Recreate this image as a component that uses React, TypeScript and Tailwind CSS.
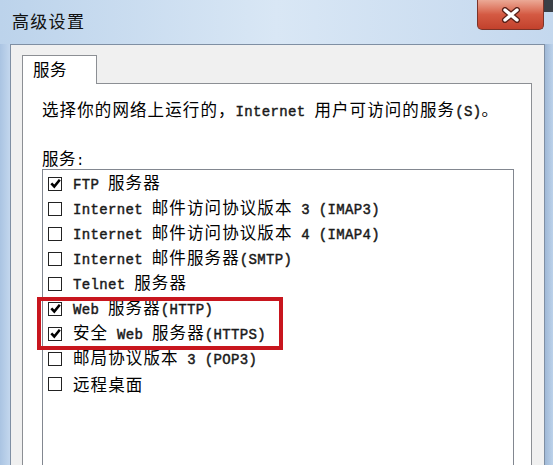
import React from "react";

const CJK = '"Noto Sans CJK SC", "Noto Sans", sans-serif';

function Mixed({ text }: { text: string }) {
  const parts = text.split(/([\x20-\x7E]+)/).filter((p) => p.length > 0);
  return (
    <>
      {parts.map((p, i) =>
        /^[\x20-\x7E]+$/.test(p) ? (
          <span
            key={i}
            className="text-[14px] tracking-[0.35px] whitespace-pre text-[#1a1a1a] [-webkit-text-stroke:0.45px_#1a1a1a]"
            style={{ fontFamily: '"Liberation Mono", monospace' }}
          >
            {p}
          </span>
        ) : (
          <span key={i} className="text-[16.5px] tracking-[1.1px]">
            {p}
          </span>
        )
      )}
    </>
  );
}

function Check({ checked }: { checked: boolean }) {
  return (
    <div className="w-[14px] h-[14px] border-[1.5px] border-[#222] bg-white flex items-center justify-center shrink-0">
      {checked && (
        <svg width="11" height="11" viewBox="0 0 11 11">
          <path d="M1.3 5.3 L4.3 8.5 L9.8 1.8" fill="none" stroke="#000" strokeWidth="2.6" />
        </svg>
      )}
    </div>
  );
}

const items: [boolean, string][] = [
  [true, "FTP 服务器"],
  [false, "Internet 邮件访问协议版本 3 (IMAP3)"],
  [false, "Internet 邮件访问协议版本 4 (IMAP4)"],
  [false, "Internet 邮件服务器(SMTP)"],
  [false, "Telnet 服务器"],
  [true, "Web 服务器(HTTP)"],
  [true, "安全 Web 服务器(HTTPS)"],
  [false, "邮局协议版本 3 (POP3)"],
  [false, "远程桌面"],
];

export default function App() {
  return (
    <div
      className="relative w-[553px] h-[465px] overflow-hidden flex flex-col bg-[#bcd2ea] text-black"
      style={{ fontFamily: CJK }}
    >
      {/* Title bar */}
      <div className="h-[44px] shrink-0 flex items-start justify-between bg-gradient-to-r from-[#bcd3eb] via-[#d9e7f5] to-[#c4d8ee]">
        <div className="pl-[12px] pt-[11px] text-[17px] leading-[20px] tracking-[1.3px] text-[#111]">高级设置</div>
        <div className="flex items-start">
          <div className="w-[67px] h-[30px] rounded-b-[5px] border border-t-0 border-[#7b3328] bg-gradient-to-b from-[#eba996] via-[#d45a43] to-[#c2412c] flex items-center justify-center">
            <svg width="20" height="16" viewBox="0 0 20 16">
              <path d="M4 3 L16 13 M16 3 L4 13" stroke="#5a2018" strokeWidth="6" strokeLinecap="round" />
              <path d="M4 3 L16 13 M16 3 L4 13" stroke="#ffffff" strokeWidth="3.4" strokeLinecap="round" />
            </svg>
          </div>
          <div className="w-[9px] h-[12px] bg-[#3a3f46]" />
        </div>
      </div>

      {/* Body */}
      <div className="flex flex-1 min-h-0">
        <div className="w-[10px] shrink-0 bg-gradient-to-r from-[#aac4e2] to-[#c3d7ee]" />
        <div className="w-[535px] shrink-0 bg-[#f0f0f0] border-l border-t border-r border-[#7f8fa3] pl-[11px] pr-[12px] pt-[10px] flex flex-col">
          {/* Tab */}
          <div className="w-[75px] h-[29px] bg-white border border-b-0 border-[#8c8f94] -mb-[1px] relative z-10 pl-[10px] pt-[3px] text-[16.5px] leading-[20px] tracking-[0.5px]">
            服务
          </div>
          {/* Tab page */}
          <div className="flex-1 bg-white border border-b-0 border-[#8c8f94] pl-[19px] pr-[17px] pt-[15px] flex flex-col">
            <div className="leading-[20px] h-[20px] whitespace-nowrap">
              <Mixed text="选择你的网络上运行的，Internet 用户可访问的服务(S)。" />
            </div>
            <div className="mt-[29px] leading-[20px] h-[20px]">
              <span className="text-[16.5px] tracking-[0.5px]">服务</span>
              <span className="text-[14px]" style={{ fontFamily: '"Liberation Mono", monospace' }}>:</span>
            </div>
            <div className="mt-[1px] flex-1 border border-b-0 border-[#828790] pl-[5px] pt-[1px] flex flex-col">
              {items.map(([c, t], i) => (
                <div key={i} className="h-[25px] flex items-center gap-[11px] whitespace-nowrap leading-[20px]">
                  <Check checked={c} />
                  <div>
                    <Mixed text={t} />
                  </div>
                </div>
              ))}
            </div>
          </div>
        </div>
        <div className="flex-1 bg-gradient-to-r from-[#9fb8d6] to-[#bcd2ea]" />
      </div>

      {/* Annotation */}
      <div className="absolute left-[37px] top-[297px] w-[246px] h-[53px] border-[4px] border-[#c8161e]" />
    </div>
  );
}
